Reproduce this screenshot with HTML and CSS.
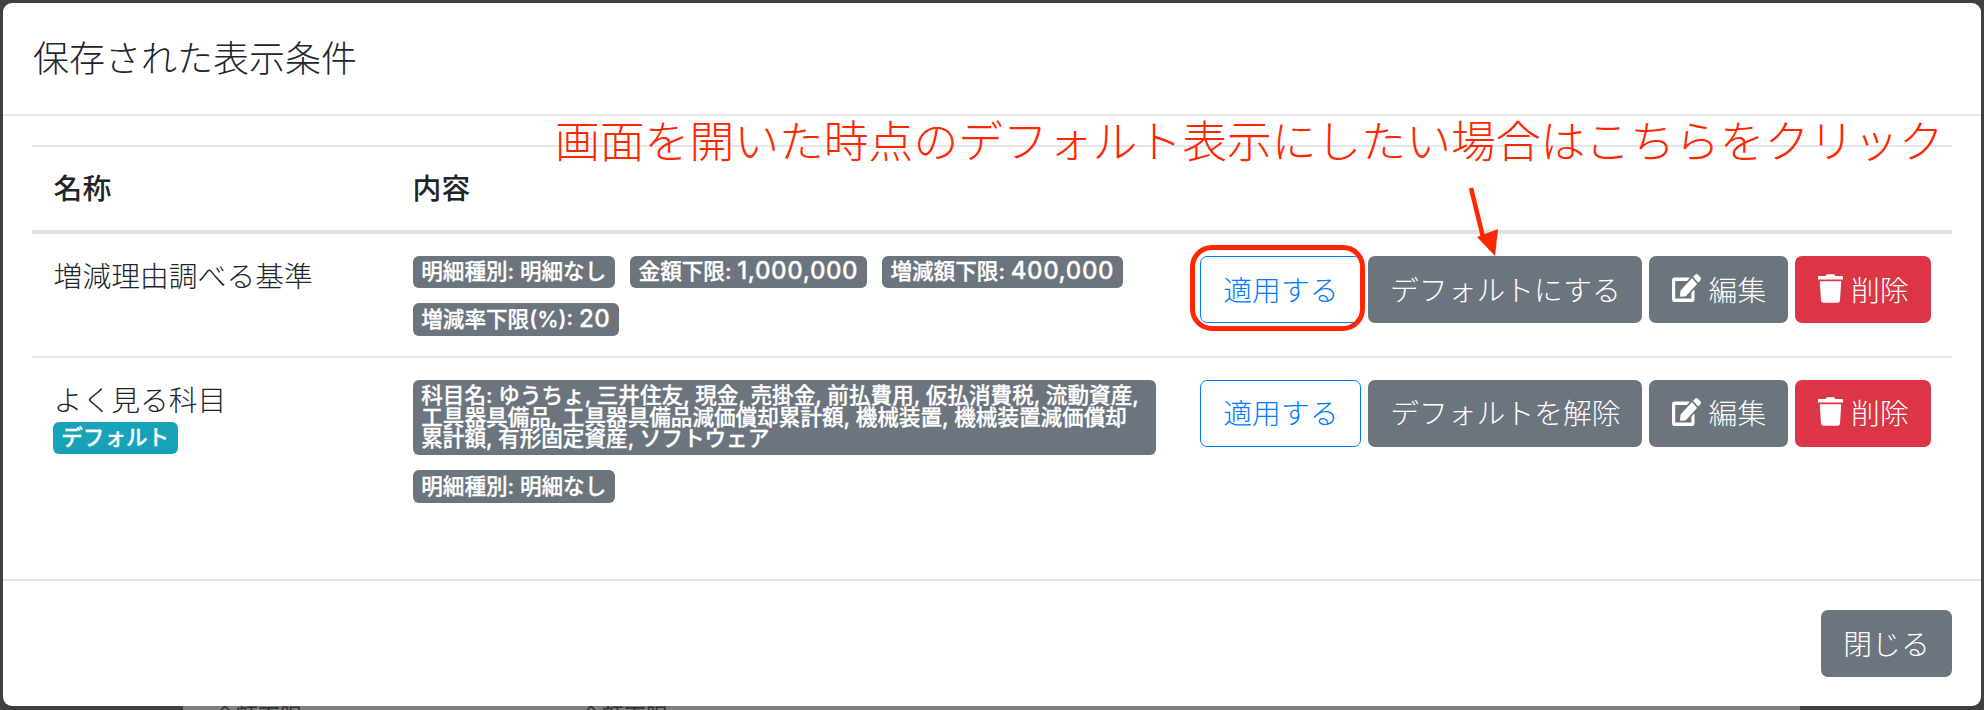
FILE: index.html
```html
<!DOCTYPE html>
<html lang="ja">
<head>
    <meta charset="UTF-8">
    <title>保存された表示条件</title>
    <link rel="stylesheet" href="styles.css">
</head>
<body>

<div class="backdrop-page">
    <span class="page-label">金額下限</span>
    <span class="page-label">金額下限</span>
</div>

<div class="modal">
    <div class="modal-header">
        <h5 class="modal-title">保存された表示条件</h5>
    </div>

    <div class="modal-body">
        <table class="table">
            <thead>
                <tr>
                    <th class="col-name">名称</th>
                    <th class="col-content">内容</th>
                    <th class="col-actions"></th>
                </tr>
            </thead>
            <tbody>
                <tr>
                    <td>増減理由調べる基準</td>
                    <td>
                        <div class="badges">
                            <span class="badge">明細種別: 明細なし</span>
                            <span class="badge">金額下限: <span class="num">1,000,000</span></span>
                            <span class="badge">増減額下限: <span class="num">400,000</span></span>
                            <span class="badge">増減率下限(%): <span class="num">20</span></span>
                        </div>
                    </td>
                    <td>
                        <div class="actions">
                            <button class="btn btn-outline">適用する</button>
                            <button class="btn btn-default-set">デフォルトにする</button>
                            <button class="btn btn-edit">
                                <svg class="icon-edit" viewBox="0 0 576 512" preserveAspectRatio="none"><path d="M402.6 83.2l90.2 90.2c3.8 3.8 3.8 10 0 13.8L274.4 405.6l-92.8 10.3c-12.4 1.4-22.9-9.1-21.5-21.5l10.3-92.8L388.8 83.2c3.8-3.8 10-3.8 13.8 0zm162-22.9l-48.8-48.8c-15.2-15.2-39.9-15.2-55.2 0l-35.4 35.4c-3.8 3.8-3.8 10 0 13.8l90.2 90.2c3.8 3.8 10 3.8 13.8 0l35.4-35.4c15.2-15.3 15.2-40 0-55.2zM384 346.2V448H64V128h229.8c3.2 0 6.2-1.3 8.5-3.5l40-40c7.6-7.6 2.2-20.5-8.5-20.5H48C21.5 64 0 85.5 0 112v352c0 26.5 21.5 48 48 48h352c26.5 0 48-21.5 48-48V306.2c0-10.7-12.9-16-20.5-8.5l-40 40c-2.2 2.3-3.5 5.3-3.5 8.5z"/></svg>
                                編集
                            </button>
                            <button class="btn btn-danger">
                                <svg class="icon-trash" viewBox="0 0 448 512"><path d="M432 32H312l-9.4-18.7A24 24 0 0 0 281.1 0H166.8a23.72 23.72 0 0 0-21.4 13.3L136 32H16A16 16 0 0 0 0 48v32a16 16 0 0 0 16 16h416a16 16 0 0 0 16-16V48a16 16 0 0 0-16-16zM53.2 467a48 48 0 0 0 47.9 45h245.8a48 48 0 0 0 47.9-45L416 128H32z"/></svg>
                                削除
                            </button>
                        </div>
                    </td>
                </tr>
                <tr>
                    <td>
                        <div class="row-name">よく見る科目</div>
                        <span class="badge badge-info">デフォルト</span>
                    </td>
                    <td>
                        <div class="badges">
                            <span class="badge badge-wrap">科目名: ゆうちょ, 三井住友, 現金, 売掛金, 前払費用, 仮払消費税, 流動資産, 工具器具備品, 工具器具備品減価償却累計額, 機械装置, 機械装置減価償却累計額, 有形固定資産, ソフトウェア</span>
                            <span class="badge">明細種別: 明細なし</span>
                        </div>
                    </td>
                    <td>
                        <div class="actions">
                            <button class="btn btn-outline">適用する</button>
                            <button class="btn btn-default-set">デフォルトを解除</button>
                            <button class="btn btn-edit">
                                <svg class="icon-edit" viewBox="0 0 576 512" preserveAspectRatio="none"><path d="M402.6 83.2l90.2 90.2c3.8 3.8 3.8 10 0 13.8L274.4 405.6l-92.8 10.3c-12.4 1.4-22.9-9.1-21.5-21.5l10.3-92.8L388.8 83.2c3.8-3.8 10-3.8 13.8 0zm162-22.9l-48.8-48.8c-15.2-15.2-39.9-15.2-55.2 0l-35.4 35.4c-3.8 3.8-3.8 10 0 13.8l90.2 90.2c3.8 3.8 10 3.8 13.8 0l35.4-35.4c15.2-15.3 15.2-40 0-55.2zM384 346.2V448H64V128h229.8c3.2 0 6.2-1.3 8.5-3.5l40-40c7.6-7.6 2.2-20.5-8.5-20.5H48C21.5 64 0 85.5 0 112v352c0 26.5 21.5 48 48 48h352c26.5 0 48-21.5 48-48V306.2c0-10.7-12.9-16-20.5-8.5l-40 40c-2.2 2.3-3.5 5.3-3.5 8.5z"/></svg>
                                編集
                            </button>
                            <button class="btn btn-danger">
                                <svg class="icon-trash" viewBox="0 0 448 512"><path d="M432 32H312l-9.4-18.7A24 24 0 0 0 281.1 0H166.8a23.72 23.72 0 0 0-21.4 13.3L136 32H16A16 16 0 0 0 0 48v32a16 16 0 0 0 16 16h416a16 16 0 0 0 16-16V48a16 16 0 0 0-16-16zM53.2 467a48 48 0 0 0 47.9 45h245.8a48 48 0 0 0 47.9-45L416 128H32z"/></svg>
                                削除
                            </button>
                        </div>
                    </td>
                </tr>
            </tbody>
        </table>
    </div>

    <div class="modal-footer">
        <button class="btn btn-close">閉じる</button>
    </div>

    <!-- 注釈 -->
    <div class="note">画面を開いた時点のデフォルト表示にしたい場合はこちらをクリック</div>
    <svg class="note-arrow" viewBox="0 0 40 72">
        <line x1="3" y1="1" x2="15" y2="50" stroke="#ff2600" stroke-width="4.5"/>
        <polygon points="9,50 30,42 27,69" fill="#ff2600"/>
    </svg>
    <div class="note-ring"></div>
</div>

</body>
</html>
```

FILE: styles.css
```css
* {
    box-sizing: border-box;
}

body {
    margin: 0;
    height: 710px;
    overflow: hidden;
    background-color: #404040;
    font-family: "Liberation Sans", "Noto Sans CJK JP", sans-serif;
    font-weight: 300;
    color: #212529;
}

/* モーダルの裏のページ (下端だけ見えている) */
.backdrop-page {
    position: absolute;
    left: 183px;
    right: 184px;
    top: 706px;
    bottom: 0;
    overflow: hidden;
    background-color: #7f7f7f;
}

.page-label {
    position: absolute;
    top: 0;
    left: 31px;
    font-size: 22px;
    font-weight: 400;
    line-height: 22px;
    color: #333;
}

.page-label + .page-label {
    left: 397px;
}

.modal {
    position: absolute;
    left: 3px;
    top: 3px;
    width: 1978px;
    height: 703px;
    display: flex;
    flex-direction: column;
    background-color: #fff;
    border-radius: 9px;
}

.modal-header {
    height: 113px;
    flex: none;
    display: flex;
    align-items: center;
    padding: 3px 30px 0;
    border-bottom: 2px solid #e3e6ea;
}

.modal-title {
    margin: 0;
    font-size: 36px;
    font-weight: 300;
    line-height: 54px;
}

.modal-body {
    flex: 1;
    padding: 29px 29px 0;
}

.table {
    width: 100%;
    border-collapse: collapse;
    table-layout: fixed;
    font-size: 28.8px;
}

.table th {
    height: 86px;
    padding: 0 21.6px 4px;
    text-align: left;
    font-size: 28.8px;
    font-weight: 500;
    vertical-align: middle;
    border-top: 2px solid #e3e6ea;
    border-bottom: 4px solid #dee2e6;
}

.col-name {
    width: 359px;
}

.col-actions {
    width: 774px;
}

.table td {
    padding: 22px 21.6px 20px;
    vertical-align: top;
    line-height: 43px;
    border-bottom: 2px solid #e3e6ea;
}

.table td:last-child {
    padding-right: 20.6px;
}

.table tbody tr:first-child td {
    height: 120px;
}

.table tbody tr:last-child td {
    border-bottom: 0;
}

.row-name {
    height: 42px;
}

.badges {
    display: flex;
    flex-wrap: wrap;
    gap: 15px;
    align-items: flex-start;
}

.badge {
    display: inline-block;
    padding: 5.4px 8.64px;
    font-family: Inter, "Noto Sans CJK JP", sans-serif;
    font-size: 21.6px;
    font-weight: 500;
    line-height: 21.6px;
    color: #fff;
    white-space: nowrap;
    background-color: #6c757d;
    border-radius: 6px;
    -webkit-text-stroke: 0.3px #fff;
}

.num {
    font-size: 24px;
    line-height: 0;
    letter-spacing: 0.6px;
}

.badge-wrap {
    white-space: normal;
}

.badge-info {
    display: block;
    width: 125px;
    margin-left: -1px;
    background-color: #17a2b8;
}

.actions {
    display: flex;
    justify-content: flex-end;
    gap: 7px;
}

.btn {
    display: flex;
    align-items: center;
    justify-content: center;
    gap: 8px;
    height: 67px;
    padding: 0 0 3px;
    font-family: inherit;
    font-size: 28.8px;
    font-weight: 300;
    color: #fff;
    white-space: nowrap;
    background-color: #6c757d;
    border: 2px solid #6c757d;
    border-radius: 7px;
}

.btn-outline {
    width: 161px;
    color: #007bff;
    background-color: #fff;
    border: 1.5px solid #007bff;
}

.btn-default-set {
    width: 274px;
}

.btn-edit {
    width: 139px;
}

.btn-danger {
    width: 136px;
    background-color: #dc3545;
    border-color: #dc3545;
}

.btn-close {
    width: 131px;
}

.btn svg {
    fill: #fff;
}

.icon-edit {
    width: 29px;
    height: 28px;
}

.icon-trash {
    width: 25px;
    height: 29px;
}

.modal-footer {
    height: 127px;
    flex: none;
    display: flex;
    justify-content: flex-end;
    padding: 29px 29px 0;
    border-top: 2px solid #e3e6ea;
}

.note {
    position: absolute;
    left: 552px;
    top: 105px;
    font-size: 44.8px;
    line-height: 68px;
    color: #ff2600;
    white-space: nowrap;
}

.note-arrow {
    position: absolute;
    left: 1465px;
    top: 184px;
    width: 40px;
    height: 72px;
}

.note-ring {
    position: absolute;
    left: 1187px;
    top: 242px;
    width: 175px;
    height: 86px;
    border: 5px solid #ff2600;
    border-radius: 22px;
}
```
